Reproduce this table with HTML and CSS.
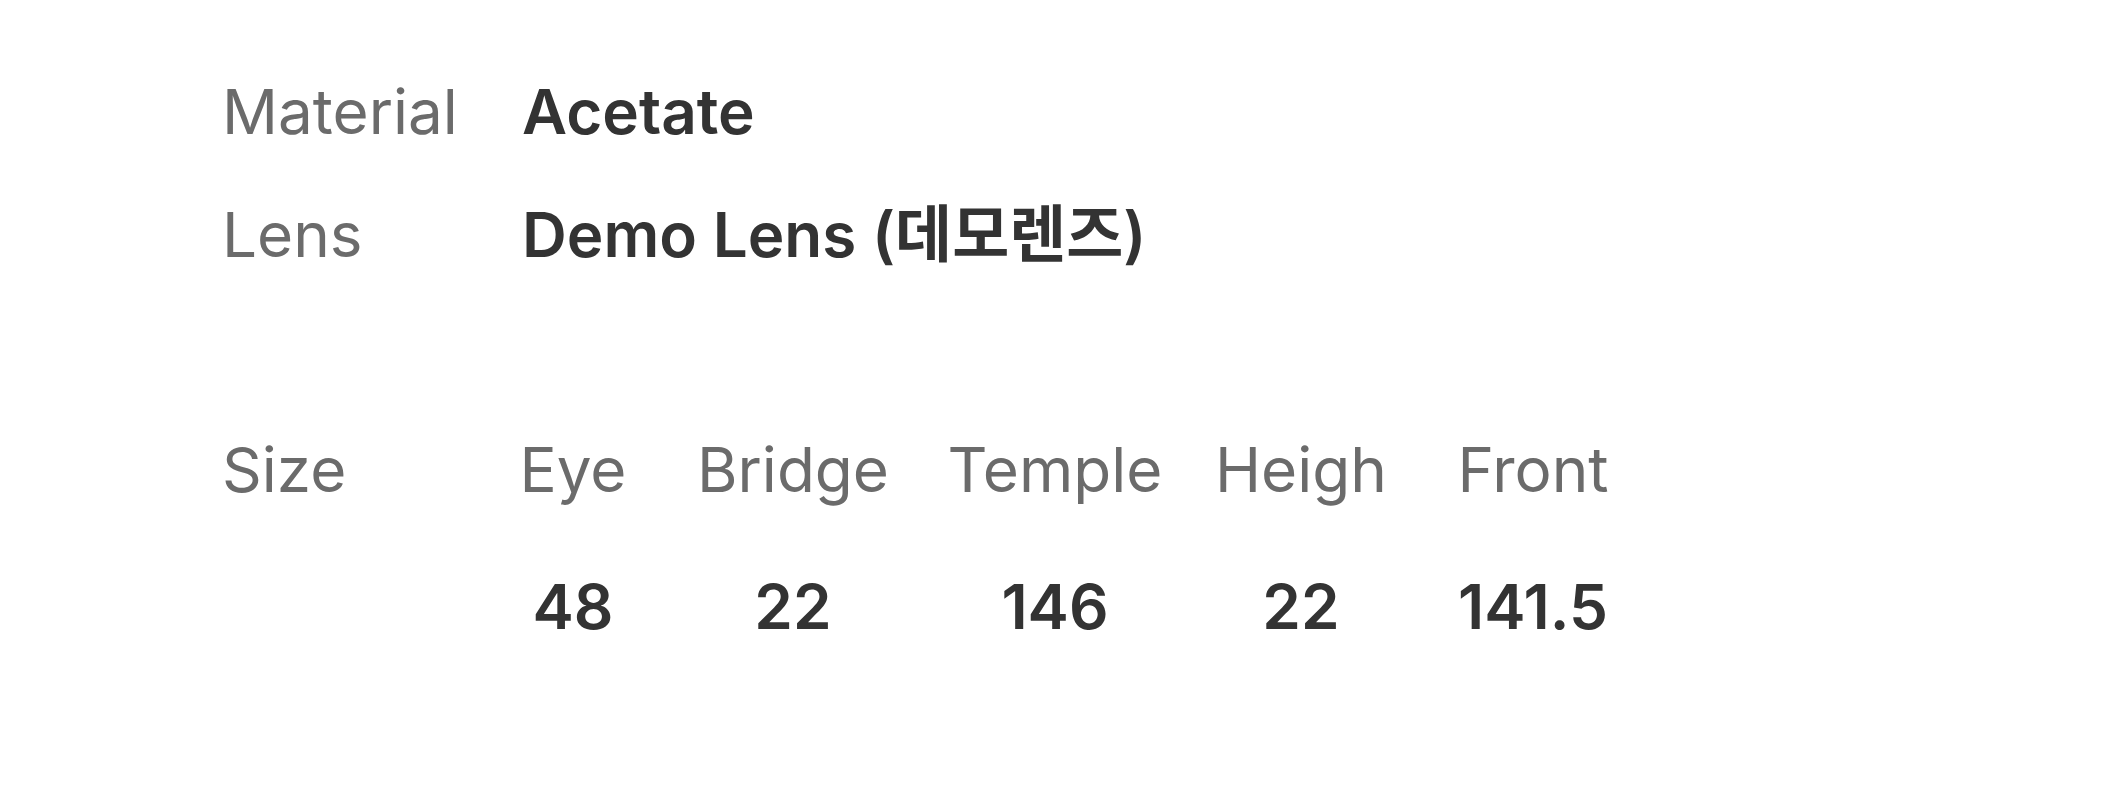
FILE: index.html
```html
<!DOCTYPE html>
<html lang="ko">
<head>
<meta charset="utf-8">
<title>Spec</title>
<link rel="stylesheet" href="styles.css">
</head>
<body>
<div class="spec">
  <div class="info">
    <div class="row"><span class="label">Material</span><span class="value">Acetate</span></div>
    <div class="row"><span class="label">Lens</span><span class="value">Demo Lens (데모렌즈)</span></div>
  </div>
  <div class="size">
    <span class="label size-label">Size</span>
    <span class="head">Eye</span>
    <span class="head">Bridge</span>
    <span class="head">Temple</span>
    <span class="head">Heigh</span>
    <span class="head">Front</span>
    <span class="num c1">48</span>
    <span class="num">22</span>
    <span class="num">146</span>
    <span class="num">22</span>
    <span class="num">141.5</span>
  </div>
</div>
</body>
</html>
```
FILE: styles.css
```css
html, body {
  margin: 0;
  background: #ffffff;
}
body {
  font-family: Inter, "Noto Sans CJK KR", sans-serif;
  font-size: 62px;
  line-height: 74px;
  color: #333333;
}
.spec {
  padding: 75px 0 0 222px;
}
.info {
  display: flex;
  flex-direction: column;
  gap: 49px;
}
.row {
  display: grid;
  grid-template-columns: 300px auto;
}
.label {
  color: #6b6b6b;
  font-weight: 400;
}
.value {
  font-weight: 600;
  color: #333333;
}
.size {
  margin-top: 161px;
  display: grid;
  grid-template-columns: 281px 140px 300px 224px 268px 196px;
  row-gap: 63px;
  justify-items: center;
}
.size-label {
  justify-self: start;
}
.head {
  color: #6b6b6b;
  white-space: nowrap;
}
.num {
  font-weight: 600;
  color: #333333;
  white-space: nowrap;
}
.c1 {
  grid-column: 2;
}
```
